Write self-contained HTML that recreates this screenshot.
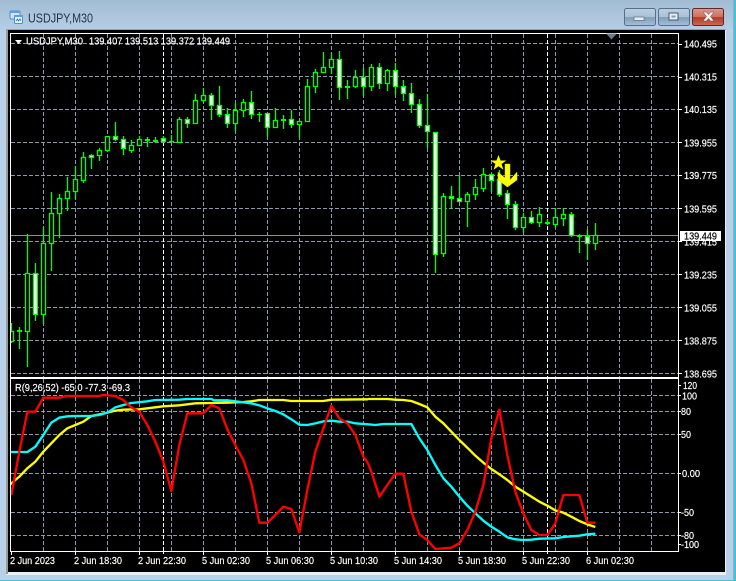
<!DOCTYPE html>
<html><head><meta charset="utf-8"><style>
html,body{margin:0;padding:0;background:#b8d1e9;width:736px;height:581px;overflow:hidden}
svg{display:block}
text{font-family:"Liberation Sans",sans-serif;font-size:10.500px;fill:#fff;stroke:#fff;stroke-width:.18px}
</style></head><body>
<svg width="736" height="581" viewBox="0 0 736 581" xmlns="http://www.w3.org/2000/svg">
<defs>
<linearGradient id="tb" x1="0" y1="0" x2="0" y2="1"><stop offset="0" stop-color="#a2bcd4"/><stop offset="1" stop-color="#b5cee6"/></linearGradient>
<linearGradient id="bt" x1="0" y1="0" x2="0" y2="1"><stop offset="0" stop-color="#bdd0e2"/><stop offset=".5" stop-color="#a9c0d6"/><stop offset=".52" stop-color="#7f9db9"/><stop offset="1" stop-color="#a5c0d8"/></linearGradient>
<linearGradient id="cl" x1="0" y1="0" x2="0" y2="1"><stop offset="0" stop-color="#dc9a8c"/><stop offset=".5" stop-color="#cf6e5c"/><stop offset=".52" stop-color="#b33a26"/><stop offset="1" stop-color="#cc6a50"/></linearGradient>
<clipPath id="c1"><rect x="11" y="34" width="667" height="343"/></clipPath>
<clipPath id="c2"><rect x="11" y="379" width="667" height="172"/></clipPath>
</defs>
<rect width="736" height="581" fill="#b8d1e9"/>
<rect width="736" height="30" fill="url(#tb)"/>
<rect x="0" y="580" width="736" height="1" fill="#3cc4d8"/>
<rect x="734" y="0" width="2" height="581" fill="#3cc4d8"/>
<rect x="733" y="0" width="1" height="581" fill="#8fb0c8"/>
<!-- window frame -->
<rect x="6" y="29" width="720" height="546" fill="#e8eef2"/>
<rect x="6" y="29" width="2" height="545" fill="#9a9a9a"/>
<rect x="6" y="29" width="720" height="1" fill="#8fa3b5"/>
<rect x="8" y="30" width="717" height="542" fill="#000"/>
<!-- title -->
<g>
<rect x="10" y="11" width="10" height="8" rx="1" fill="#cfe4f8" stroke="#4a8fd0"/>
<rect x="10" y="11" width="10" height="2" fill="#5a9fe0"/>
<rect x="14.5" y="15.5" width="8" height="8" rx="1" fill="#e8f2fc" stroke="#4a8fd0"/>
<rect x="14" y="15" width="9" height="2" fill="#5a9fe0"/>
<path d="M16 21l1.5-2 1 2 1.500-2 1 2" fill="none" stroke="#2a6fb0" stroke-width=".8"/>
</g>
<text x="28" y="22.500" style="font-size:13px;fill:#1f3346;stroke:none" textLength="65" lengthAdjust="spacingAndGlyphs">USDJPY,M30</text>
<!-- buttons -->
<rect x="624.500" y="8.500" width="31" height="17" rx="2" fill="url(#bt)" stroke="#56708a"/>
<rect x="634" y="17" width="10" height="3.500" fill="#e8eef4" stroke="#5a6a7a" stroke-width=".7"/>
<rect x="658.500" y="8.500" width="31" height="17" rx="2" fill="url(#bt)" stroke="#56708a"/>
<rect x="669" y="13" width="9" height="7" fill="#e8eef4" stroke="#4a5a6a"/>
<rect x="671.500" y="15.500" width="4" height="2" fill="#7f9db9"/>
<rect x="692.500" y="8.500" width="31" height="17" rx="2" fill="url(#cl)" stroke="#5a2a30"/>
<path d="M703 12h3.500l2 2.500 2-2.500h3.500l-3.500 4.500 3.500 4.500h-3.500l-2-2.500-2 2.500h-3.500l3.500-4.500z" fill="#f0f0f0" stroke="#6a4a4a" stroke-width=".5"/>
<!-- chart frames -->
<g fill="none" stroke="#fff" shape-rendering="crispEdges">
<path d="M10.500 33.500H678.500V377.500H10.500z"/>
<path d="M10.500 378.500H678.500V551.500H10.500z" />
</g>
<!-- grid main -->
<g stroke="#8c9bab" stroke-dasharray="4 2" fill="none" shape-rendering="crispEdges" clip-path="url(#c1)">
<path d="M11 43.500H678M11 76.500H678M11 109.500H678M11 142.500H678M11 175.500H678M11 208.500H678M11 241.500H678M11 274.500H678M11 307.500H678M11 340.500H678M11 373.500H678"/>
<path d="M43.500 34V377M75.500 34V377M107.500 34V377M139.500 34V377M171.500 34V377M203.500 34V377M235.500 34V377M267.500 34V377M299.500 34V377M331.500 34V377M363.500 34V377M395.500 34V377M427.500 34V377M459.500 34V377M491.500 34V377M523.500 34V377M555.500 34V377M587.500 34V377M619.500 34V377M651.500 34V377"/>
</g>
<path d="M163.500 34V377M547.500 34V377" stroke="#fff" stroke-dasharray="4 2" shape-rendering="crispEdges"/>
<!-- grid sub -->
<g stroke="#8c9bab" stroke-dasharray="4 2" fill="none" shape-rendering="crispEdges">
<path d="M11 395.500H678M11 411.500H678M11 434.500H678M11 473.500H678M11 512.500H678M11 535.500H678"/>
<path d="M43.500 379V551M75.500 379V551M107.500 379V551M139.500 379V551M171.500 379V551M203.500 379V551M235.500 379V551M267.500 379V551M299.500 379V551M331.500 379V551M363.500 379V551M395.500 379V551M427.500 379V551M459.500 379V551M491.500 379V551M523.500 379V551M555.500 379V551M587.500 379V551M619.500 379V551M651.500 379V551"/>
</g>
<path d="M163.500 379V551M547.500 379V551" stroke="#fff" stroke-dasharray="4 2" shape-rendering="crispEdges"/>
<!-- bid line -->
<path d="M11 235.500H678" stroke="#8a9098" shape-rendering="crispEdges"/>
<!-- ask triangle -->
<path d="M606 33.500h11l-5.500 6z" fill="#6c7a89"/>
<!-- candles -->
<g clip-path="url(#c1)" stroke="#00ff00" stroke-width="1.300">
<path fill="none" d="M11.500 323V343M19.500 327V349M27.500 234V367M35.500 263V321M43.500 227V324M51.500 192V271M59.500 194V238M67.500 177V211M75.500 166V199M83.500 152V183M91.500 154V169M99.500 148V161M107.500 136V151M115.500 122V141M123.500 136V155M131.500 140V153M139.500 136V146M147.500 137V147M155.500 137V143M163.500 136V143M171.500 135V143M179.500 117V143M187.500 117V128M195.500 94V123M203.500 88V102M211.500 93V120M219.500 86V117M227.500 108V128M235.500 103V131M243.500 99V117M251.500 91V119M259.500 112V122M267.500 113V137M275.500 108V128M283.500 115V129M291.500 110V128M299.500 121V138M307.500 79V121M315.500 69V93M323.500 52V73M331.500 53V74M339.500 51V100M347.500 80V99M355.500 70V88M363.500 68V96M371.500 64V91M379.500 63V89M387.500 69V91M395.500 63V95M403.500 80V101M411.500 83V113M419.500 99V128M427.500 94V148M435.500 132V273M443.500 193V257M451.500 186V209M459.500 175V200M467.500 192V227M475.500 179V200M483.500 168V192M491.500 174V192M499.500 170V197M507.500 190V219M515.500 201V230M523.500 213V233M531.500 211V224M539.500 207V227M547.500 219V225M555.500 208V228M563.500 208V226M571.500 212V237M579.500 234V253M587.500 230V260M595.500 223V250"/>
<path fill="#000" d="M9.500 331.500h4v10h-4zM25.500 273.500h4v58h-4zM41.500 243.500h4v71h-4zM49.500 213.500h4v30h-4zM57.500 198.500h4v15h-4zM65.500 191.500h4v7h-4zM73.500 179.500h4v12h-4zM81.500 157.500h4v23h-4zM97.500 150.500h4v5h-4zM105.500 136.500h4v14h-4zM129.500 145.500h4v5h-4zM137.500 139.500h4v6h-4zM177.500 119.500h4v23h-4zM193.500 100.500h4v23h-4zM201.500 95.500h4v5h-4zM233.500 110.500h4v13h-4zM241.500 102.500h4v8h-4zM273.500 120.500h4v7h-4zM297.500 121.500h4v3h-4zM305.500 86.500h4v35h-4zM313.500 72.500h4v14h-4zM321.500 67.500h4v5h-4zM329.500 59.500h4v8h-4zM353.500 77.500h4v9h-4zM369.500 67.500h4v19h-4zM385.500 70.500h4v13h-4zM441.500 196.500h4v57h-4zM465.500 194.500h4v7h-4zM473.500 187.500h4v7h-4zM481.500 174.500h4v14h-4zM521.500 217.500h4v10h-4zM537.500 214.500h4v8h-4zM553.500 217.500h4v7h-4zM561.500 214.500h4v4h-4zM593.500 235.500h4v8h-4z"/>
<path fill="#fff" d="M33.500 273.500h4v41h-4zM89.500 155.500h4v2h-4zM113.500 136.500h4v3h-4zM121.500 139.500h4v9h-4zM161.500 138.500h4v3h-4zM185.500 119.500h4v4h-4zM209.500 95.500h4v10h-4zM217.500 105.500h4v9h-4zM225.500 114.500h4v9h-4zM249.500 102.500h4v12h-4zM265.500 113.500h4v14h-4zM289.500 119.500h4v5h-4zM337.500 59.500h4v28h-4zM361.500 77.500h4v9h-4zM377.500 67.500h4v16h-4zM393.500 70.500h4v16h-4zM401.500 86.500h4v7h-4zM409.500 93.500h4v11h-4zM417.500 104.500h4v21h-4zM425.500 125.500h4v6h-4zM433.500 132.500h4v122h-4zM449.500 196.500h4v2h-4zM457.500 198.500h4v3h-4zM489.500 174.500h4v6h-4zM497.500 179.500h4v15h-4zM505.500 193.500h4v11h-4zM513.500 204.500h4v23h-4zM529.500 217.500h4v5h-4zM569.500 214.500h4v21h-4zM585.500 236.500h4v7h-4z"/>
<path fill="none" stroke-width="2" d="M17 331h5M145 140h5M153 141h5M281 120h5M345 87h5M545 223h5M577 236h5"/>
<path fill="none" d="M169 141.500h5M257 114.500h5"/>
</g>
<!-- arrow + star -->
<path d="M505 164h5v16l7-8v8l-9.500 7-9.500-7v-8l7 6z" fill="#ffff00" stroke="#d8d800" stroke-width=".5"/>
<path d="M498.500 155l2 5.500h5.800l-4.700 3.500 1.800 5.800-4.900-3.500-4.900 3.500 1.800-5.800-4.700-3.500h5.800z" fill="#ffff00"/>
<!-- indicator lines -->
<g clip-path="url(#c2)" fill="none" stroke-width="7" stroke-linejoin="round">
<g transform="translate(0 375) scale(.33333)">
<polyline stroke="#ffff00" points="20,338 34,325 58,305 82,280 106,260 130,230 154,205 178,180 202,160 226,150 250,140 274,123 298,118 322,113 346,107 370,104 418,103 442,100 466,97 490,94 538,91 562,88 586,85 634,84 682,83 730,81 754,79 778,75 850,75 874,78 970,78 994,74 1104,73"/>
<polyline stroke="#00ffff" points="20,231 82,231 106,215 130,180 154,143 178,128 202,124 226,123 274,123 298,120 322,113 346,97 370,90 394,84 442,79 466,75 538,74 562,72 634,72 642,76 682,76 706,79 754,85 778,91 802,100 826,108 850,118 874,133 898,149 922,150 946,145 970,139 994,137 1018,140 1042,140 1066,145 1104,148"/>
<polyline stroke="#ff0000" points="34,360 58,230 82,110 106,110 130,68 154,68 178,68 202,63 226,63 250,63 274,63 298,63 310,60 346,63 370,75 394,97 418,110 442,150 466,200 490,260 514,348 538,210 562,115 586,115 610,115 634,90 658,100 682,163 706,210 730,255 754,325 778,443 802,443 826,420 850,395 874,402 898,472 922,345 946,230 970,160 994,92 1018,130 1042,145 1066,180 1090,245 1104,265"/>
</g>
<g transform="translate(368 375) scale(.33333)">
<polyline stroke="#ffff00" points="0,72 58,72 82,74 106,75 130,78 154,87 178,97 202,125 226,145 250,170 274,195 298,218 322,242 346,263 370,282 394,298 418,315 442,335 466,350 490,365 514,380 538,392 562,406 586,413 610,425 634,438 658,448 682,456"/>
<polyline stroke="#00ffff" points="0,148 22,150 46,147 130,147 154,190 178,225 202,270 226,310 250,335 274,365 298,392 322,415 346,437 370,455 394,470 418,487 442,493 466,495 490,494 514,491 562,490 586,486 634,482 658,478 682,476"/>
<polyline stroke="#ff0000" points="0,265 10,290 34,365 58,330 82,296 106,296 130,410 154,478 178,495 202,522 226,520 250,518 274,505 298,465 322,410 346,330 370,190 394,104 418,240 442,350 466,415 490,465 514,480 538,480 562,445 586,360 610,360 634,360 658,443 682,443"/>
</g>
</g>
<!-- ticks -->
<path d="M678 44.500h4M678 77.500h4M678 109.500h4M678 142.500h4M678 175.500h4M678 208.500h4M678 241.500h4M678 274.500h4M678 307.500h4M678 340.500h4M678 373.500h4M678 385.500h3M678 395.500h3M678 411.500h3M678 434.500h3M678 473.500h3M678 512.500h3M678 535.500h3M678 544.500h3M11.500 551v4M75.500 551v4M139.500 551v4M203.500 551v4M267.500 551v4M331.500 551v4M395.500 551v4M459.500 551v4M523.500 551v4M587.500 551v4M163.500 551v3M547.500 551v3" stroke="#fff" shape-rendering="crispEdges"/>
<!-- chart text -->
<path d="M15 40h7l-3.500 4z" fill="#fff"/>
<text x="26" y="44.500" textLength="57" lengthAdjust="spacingAndGlyphs">USDJPY,M30</text>
<text x="89" y="44.500" textLength="141" lengthAdjust="spacingAndGlyphs">139.407 139.513 139.372 139.449</text>
<text x="15" y="391" textLength="115" lengthAdjust="spacingAndGlyphs">R(9,26,52) -65.0 -77.3 -69.3</text>
<g>
<text x="684" y="47.500" textLength="33" lengthAdjust="spacingAndGlyphs">140.495</text>
<text x="684" y="80.500" textLength="33" lengthAdjust="spacingAndGlyphs">140.315</text>
<text x="684" y="113" textLength="33" lengthAdjust="spacingAndGlyphs">140.135</text>
<text x="684" y="146.500" textLength="33" lengthAdjust="spacingAndGlyphs">139.955</text>
<text x="684" y="179" textLength="33" lengthAdjust="spacingAndGlyphs">139.775</text>
<text x="684" y="212.500" textLength="33" lengthAdjust="spacingAndGlyphs">139.595</text>
<text x="684" y="245.500" textLength="33" lengthAdjust="spacingAndGlyphs">139.415</text>
<text x="684" y="278.500" textLength="33" lengthAdjust="spacingAndGlyphs">139.235</text>
<text x="684" y="311.500" textLength="33" lengthAdjust="spacingAndGlyphs">139.055</text>
<text x="684" y="344.500" textLength="33" lengthAdjust="spacingAndGlyphs">138.875</text>
<text x="684" y="377.500" textLength="33" lengthAdjust="spacingAndGlyphs">138.695</text>
</g>
<rect x="680" y="231" width="41" height="10" fill="#fff"/>
<text x="684" y="239.500" style="fill:#000;stroke:#000" textLength="33" lengthAdjust="spacingAndGlyphs">139.449</text>
<text x="683" y="389" textLength="14" lengthAdjust="spacingAndGlyphs">120</text>
<text x="682" y="399.500" textLength="15" lengthAdjust="spacingAndGlyphs">100</text>
<text x="681" y="415" textLength="10" lengthAdjust="spacingAndGlyphs">80</text>
<text x="681" y="438" textLength="10" lengthAdjust="spacingAndGlyphs">50</text>
<text x="682" y="477" textLength="18" lengthAdjust="spacingAndGlyphs">0.00</text>
<text x="681" y="516" textLength="13" lengthAdjust="spacingAndGlyphs">-50</text>
<text x="681" y="539" textLength="13" lengthAdjust="spacingAndGlyphs">-80</text>
<text x="681" y="548" textLength="18" lengthAdjust="spacingAndGlyphs">-100</text>
<g>
<text x="10" y="564" textLength="45" lengthAdjust="spacingAndGlyphs">2 Jun 2023</text>
<text x="74" y="564" textLength="48" lengthAdjust="spacingAndGlyphs">2 Jun 18:30</text>
<text x="138" y="564" textLength="48" lengthAdjust="spacingAndGlyphs">2 Jun 22:30</text>
<text x="202" y="564" textLength="48" lengthAdjust="spacingAndGlyphs">5 Jun 02:30</text>
<text x="266" y="564" textLength="48" lengthAdjust="spacingAndGlyphs">5 Jun 06:30</text>
<text x="330" y="564" textLength="48" lengthAdjust="spacingAndGlyphs">5 Jun 10:30</text>
<text x="394" y="564" textLength="48" lengthAdjust="spacingAndGlyphs">5 Jun 14:30</text>
<text x="458" y="564" textLength="48" lengthAdjust="spacingAndGlyphs">5 Jun 18:30</text>
<text x="522" y="564" textLength="48" lengthAdjust="spacingAndGlyphs">5 Jun 22:30</text>
<text x="586" y="564" textLength="48" lengthAdjust="spacingAndGlyphs">6 Jun 02:30</text>
</g>
</svg>
</body></html>
